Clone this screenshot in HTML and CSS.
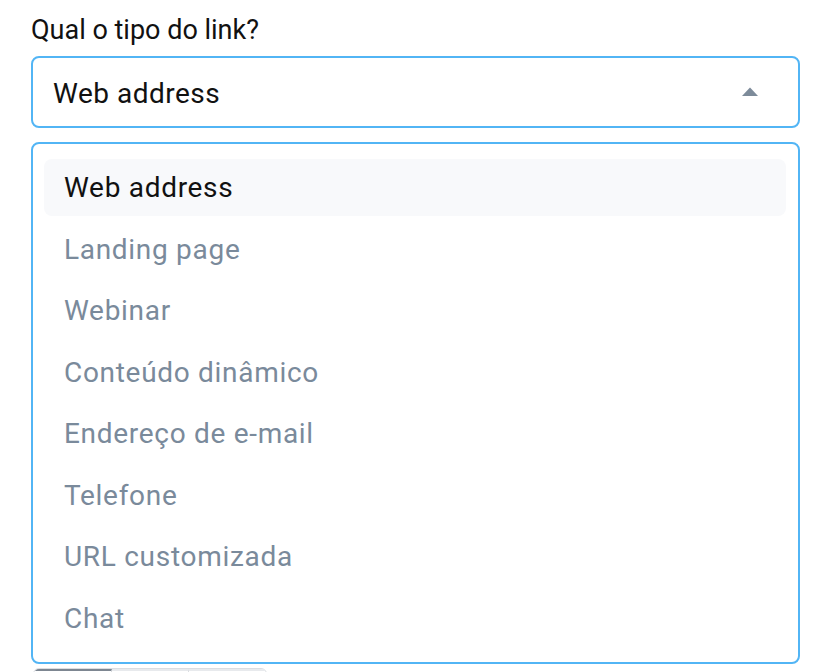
FILE: index.html
```html
<!DOCTYPE html>
<html lang="pt">
<head>
<meta charset="utf-8">
<link rel="stylesheet" href="styles.css">
</head>
<body>
<div class="field">
  <label class="label">Qual o tipo do link?</label>
  <div class="select">
    <span class="value">Web address</span>
    <svg class="caret" width="16" height="9" viewBox="0 0 16 9"><path d="M0 9 L8 0.5 L16 9 Z" fill="#7d8b9a"/></svg>
  </div>
  <ul class="menu">
    <li class="item active">Web address</li>
    <li class="item">Landing page</li>
    <li class="item">Webinar</li>
    <li class="item">Conteúdo dinâmico</li>
    <li class="item">Endereço de e-mail</li>
    <li class="item">Telefone</li>
    <li class="item">URL customizada</li>
    <li class="item">Chat</li>
  </ul>
  <div class="tabs">
    <span class="tab first"></span>
    <span class="tab"></span>
    <span class="tab"></span>
  </div>
</div>
</body>
</html>
```
FILE: styles.css
```css
* { box-sizing: border-box; }
html, body { margin: 0; padding: 0; background: #fff; }
body {
  font-family: Roboto, "Noto Sans", sans-serif;
  overflow: hidden;
  height: 672px;
}
.field {
  padding: 16px 0 0 31px;
  width: 800px;
  display: flex;
  flex-direction: column;
}
.label {
  font-size: 27px;
  line-height: 28px;
  color: #111;
  height: 40px;
}
.select {
  height: 72px;
  border: 2px solid #52b5f5;
  border-radius: 8px;
  display: flex;
  align-items: center;
  justify-content: space-between;
  padding: 2px 40px 0 20px;
}
.value {
  font-size: 28px;
  color: #111;
  letter-spacing: 0.5px;
}
.caret { display: block; margin-top: -4px; }
.menu {
  list-style: none;
  margin: 14px 0 0 0;
  padding: 15px 12px 12px 11px;
  height: 522px;
  border: 2px solid #52b5f5;
  border-radius: 8px;
  display: flex;
  flex-direction: column;
}
.item {
  height: 61.5px;
  flex: 0 0 auto;
  display: flex;
  align-items: center;
  padding: 0 20px;
  font-size: 28px;
  letter-spacing: 0.7px;
  color: #7a8a9b;
  border-radius: 8px;
}
.item.active {
  height: 57px;
  margin-bottom: 2.5px;
  background: #f8f9fb;
  color: #111;
}
.tabs {
  margin: 4px 0 0 2px;
  display: flex;
  height: 20px;
  width: 234px;
  border: 1px solid #dadde1;
  border-radius: 6px 6px 0 0;
  overflow: hidden;
}
.tab {
  flex: 1;
  border-right: 1px solid #dadde1;
  border-top: 2px solid #e8eaed;
}
.tab:last-child { border-right: none; }
.tab.first { border-top: 2px solid #7d8691; }
```
